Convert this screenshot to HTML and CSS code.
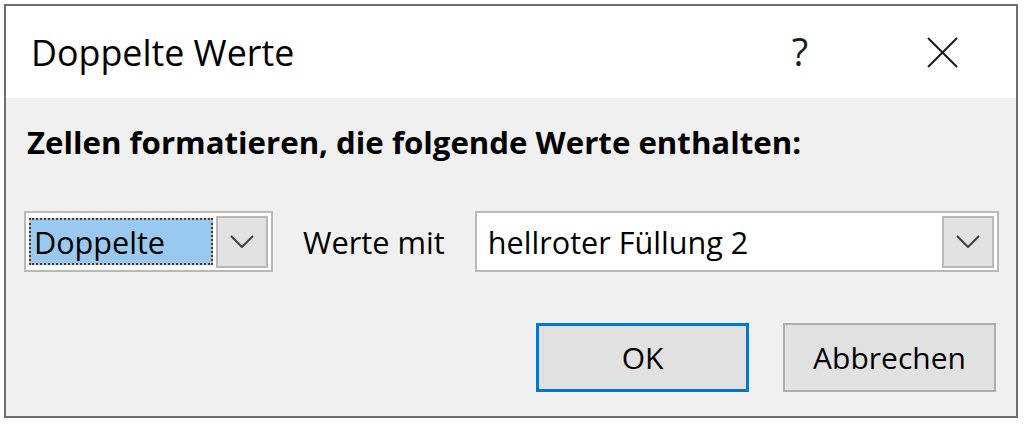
FILE: index.html
```html
<!DOCTYPE html>
<html lang="de">
<head>
    <meta charset="UTF-8">
    <title>Doppelte Werte</title>
    <link rel="stylesheet" href="styles.css">
</head>
<body>
    <div class="dialog">
        <div class="titlebar">
            <span class="title">Doppelte Werte</span>
            <span class="help">?</span>
            <span class="close">
                <svg width="31" height="31" viewBox="0 0 31 31">
                    <path d="M1 1 L30 30 M30 1 L1 30" stroke="#1a1a1a" stroke-width="2" fill="none"/>
                </svg>
            </span>
        </div>

        <div class="content">
            <div class="heading">Zellen formatieren, die folgende Werte enthalten:</div>

            <div class="row">
                <div class="combo combo-type">
                    <div class="combo-value selected"><span>Doppelte</span></div>
                    <div class="combo-button">
                        <svg width="24" height="13" viewBox="0 0 24 13">
                            <path d="M1 1 L12 12 L23 1" stroke="#404040" stroke-width="2" fill="none"/>
                        </svg>
                    </div>
                </div>
                <span class="label">Werte mit</span>
                <div class="combo combo-format">
                    <div class="combo-value">hellroter Füllung 2</div>
                    <div class="combo-button">
                        <svg width="24" height="13" viewBox="0 0 24 13">
                            <path d="M1 1 L12 12 L23 1" stroke="#404040" stroke-width="2" fill="none"/>
                        </svg>
                    </div>
                </div>
            </div>

            <div class="actions">
                <button class="btn btn-default">OK</button>
                <button class="btn">Abbrechen</button>
            </div>
        </div>
    </div>
</body>
</html>
```

FILE: styles.css
```css
/* Windows-Dialog, vergrößert */
:root {
    --dialog-bg: #f0f0f0;
    --window-border: #6e6e6e;
    --control-border: #b9b9b9;
    --button-bg: #e1e1e1;
    --button-border: #adadad;
    --accent: #0078d7;
    --selection: #99c9ef;
}

body {
    margin: 0;
    background-color: #fff;
    font-family: 'Open Sans', 'Noto Sans', sans-serif;
    color: #000;
}

.dialog {
    margin: 4px 0 0 4px;
    width: 1010px;
    height: 410px;
    border: 2px solid var(--window-border);
    background-color: var(--dialog-bg);
    display: flex;
    flex-direction: column;
}

.titlebar {
    height: 92px;
    background-color: #fff;
    display: flex;
    align-items: center;
    padding-left: 25px;
}

.title {
    font-size: 35.8px;
    flex: 1;
}

.help {
    font-size: 38px;
    width: 30px;
    text-align: center;
    margin-right: 112px;
    margin-top: -2px;
    color: #1a1a1a;
}

.close {
    display: flex;
    margin-right: 58px;
}

.content {
    padding: 0 17px 0 18px;
}

.heading {
    margin-top: 22px;
    height: 44px;
    line-height: 44px;
    font-size: 31.2px;
    font-weight: 700;
    padding-left: 3px;
}

.row {
    margin-top: 47px;
    height: 61px;
    display: flex;
    align-items: center;
}

.combo {
    box-sizing: border-box;
    height: 61px;
    border: 2px solid var(--control-border);
    display: flex;
    align-items: center;
    padding: 3px;
    gap: 3px;
    background-color: #fff;
}

.combo-type {
    width: 249px;
}

.combo-format {
    flex: 1;
}

.combo-value {
    flex: 1;
    height: 47px;
    display: flex;
    align-items: center;
    font-size: 30.6px;
    padding-left: 8px;
}

.combo-value.selected {
    background-color: var(--selection);
    border: 2px dotted #663610;
    box-sizing: border-box;
    padding-left: 3px;
}

.combo-button {
    box-sizing: border-box;
    width: 52px;
    height: 52px;
    background-color: var(--button-bg);
    border: 2px solid var(--control-border);
    display: flex;
    align-items: center;
    justify-content: center;
}

.label {
    font-size: 30.8px;
    margin: 0 30px 0 30px;
}

.actions {
    margin-top: 51px;
    display: flex;
    justify-content: flex-end;
    gap: 34px;
    padding-right: 3px;
}

.btn {
    box-sizing: border-box;
    width: 213px;
    height: 69px;
    font-family: 'Open Sans', 'Noto Sans', sans-serif;
    font-size: 30px;
    color: #000;
    background-color: var(--button-bg);
    border: 2px solid var(--button-border);
    padding: 0;
}

.btn-default {
    border: 3px solid var(--accent);
}
```
